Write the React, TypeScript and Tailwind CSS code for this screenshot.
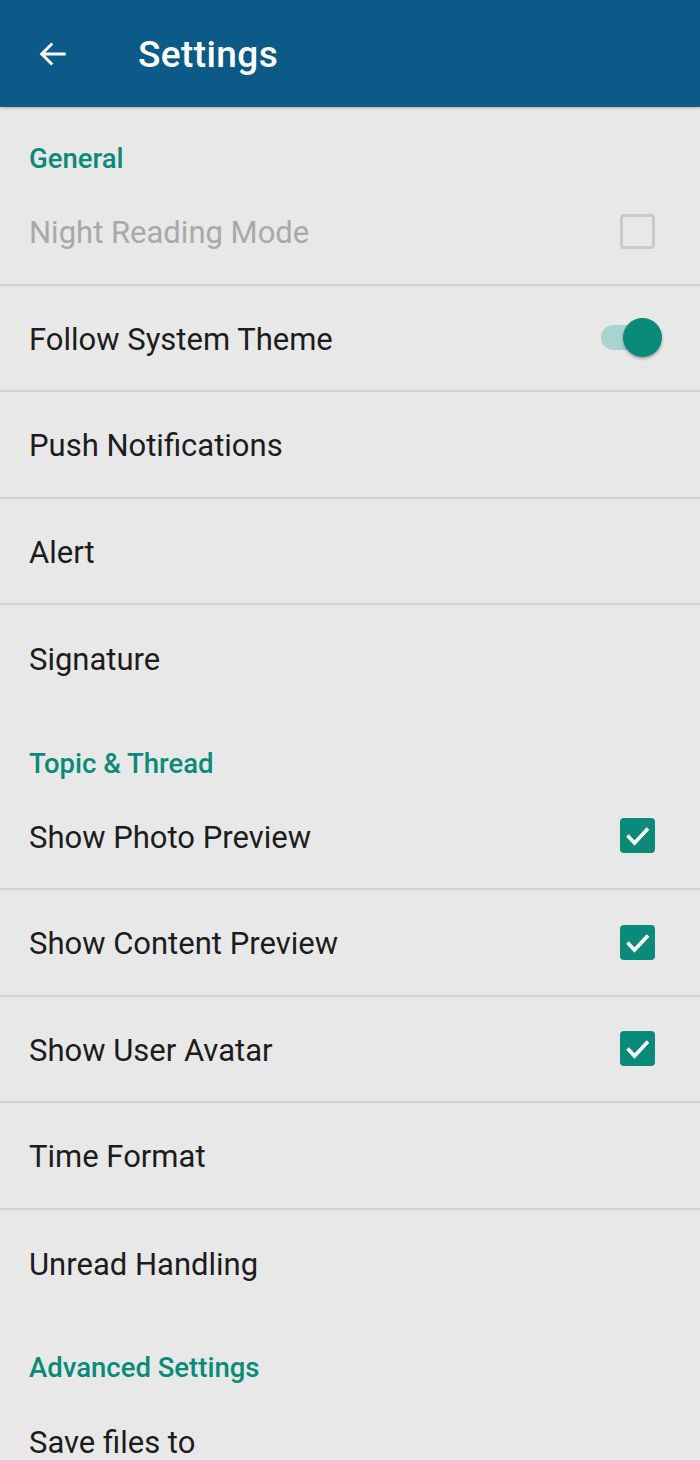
import React from 'react';

type Control = 'none' | 'check' | 'checked' | 'switch';

interface Row {
  label: string;
  control?: Control;
  disabled?: boolean;
}

interface Section {
  title: string;
  rows: Row[];
}

const sections: Section[] = [
  {
    title: 'General',
    rows: [
      { label: 'Night Reading Mode', control: 'check', disabled: true },
      { label: 'Follow System Theme', control: 'switch' },
      { label: 'Push Notifications' },
      { label: 'Alert' },
      { label: 'Signature' }
    ]
  },
  {
    title: 'Topic & Thread',
    rows: [
      { label: 'Show Photo Preview', control: 'checked' },
      { label: 'Show Content Preview', control: 'checked' },
      { label: 'Show User Avatar', control: 'checked' },
      { label: 'Time Format' },
      { label: 'Unread Handling' }
    ]
  },
  {
    title: 'Advanced Settings',
    rows: [{ label: 'Save files to' }]
  }
];

function Checkbox({ checked }: { checked: boolean }) {
  if (!checked) {
    return <div className="w-[35px] h-[35px] rounded-[4px] border-[3px] border-[#c9c9c9]" />;
  }
  return (
    <div className="w-[35px] h-[35px] rounded-[4px] bg-[#0a8a78]">
      <svg width="35" height="35" viewBox="0 0 35 35" fill="none">
        <path d="M7.5 17.5l7 7.5L28 10.5" stroke="#ffffff" strokeWidth="3.6" />
      </svg>
    </div>
  );
}

function Switch() {
  return (
    <div className="relative w-[62px] h-[40px] flex items-center">
      <div className="ml-[1px] w-[50px] h-[25px] rounded-full bg-[#a9d3cf]" />
      <div className="absolute right-0 top-0 w-[39px] h-[39px] rounded-full bg-[#0a8a78] shadow-[0_2px_3px_rgba(0,0,0,0.3)]" />
    </div>
  );
}

function SettingRow({ row, last }: { row: Row; last: boolean }) {
  return (
    <div
      className={`h-[106.5px] flex items-center justify-between pl-[29px] pr-[45px] ${last ? '' : 'border-b-2 border-[#d2d2d2]'}`}
    >
      <span className={`pt-[3px] text-[31px] leading-none ${row.disabled ? 'text-[#a9a9a9]' : 'text-[#1c1c1c]'}`}>
        {row.label}
      </span>
      {row.control === 'check' && <Checkbox checked={false} />}
      {row.control === 'checked' && <Checkbox checked />}
      {row.control === 'switch' && (
        <div className="-mr-[7px]">
          <Switch />
        </div>
      )}
    </div>
  );
}

export default function App() {
  return (
    <div className="w-[700px] h-[1460px] overflow-hidden bg-[#e8e8e8] font-['Roboto',sans-serif]">
      <header className="relative z-10 h-[107px] bg-[#0b5a87] flex items-center shadow-[0_1px_3px_rgba(0,0,0,0.25)]">
        <div className="w-[138px] pl-[35px] flex items-center">
          <svg width="36" height="36" viewBox="0 0 24 24" fill="none">
            <path d="M20.5 12H4.5M11.5 5l-7 7 7 7" stroke="#ffffff" strokeWidth="2" />
          </svg>
        </div>
        <h1 className="pt-[2px] text-white text-[37px] leading-none font-medium tracking-[0.4px]">Settings</h1>
      </header>

      {sections.map((section) => (
        <section key={section.title}>
          <div className="h-[72px] pt-[38px] pl-[29px]">
            <h2 className="text-[27.5px] leading-[28px] font-medium text-[#0a8a78]">{section.title}</h2>
          </div>
          {section.rows.map((row, i) => (
            <SettingRow key={row.label} row={row} last={i === section.rows.length - 1} />
          ))}
        </section>
      ))}
    </div>
  );
}
